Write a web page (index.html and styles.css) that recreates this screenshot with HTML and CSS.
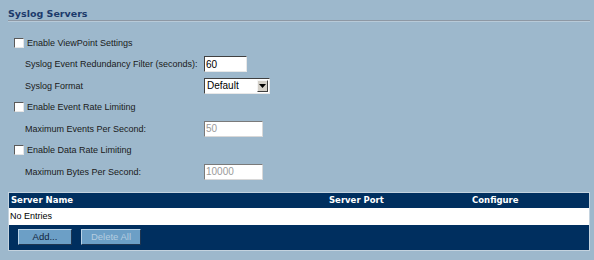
FILE: index.html
```html
<!DOCTYPE html>
<html lang="en">
<head>
    <meta charset="UTF-8">
    <title>Syslog Servers</title>
    <link rel="stylesheet" href="styles.css">
</head>
<body>
    <div class="page">
        <h1 class="title">Syslog Servers</h1>
        <form class="settings">
            <div class="row">
                <label class="check"><input type="checkbox"> Enable ViewPoint Settings</label>
            </div>
            <div class="row sub">
                <span class="label">Syslog Event Redundancy Filter (seconds):</span>
                <input type="text" class="field short" value="60">
            </div>
            <div class="row sub">
                <span class="label">Syslog Format</span>
                <div class="select-wrap">
                    <select class="field select">
                        <option>Default</option>
                    </select>
                    <span class="drop"><svg width="7" height="4" viewBox="0 0 7 4"><path d="M0 0h7L3.5 4z" fill="#000"/></svg></span>
                </div>
            </div>
            <div class="row">
                <label class="check"><input type="checkbox"> Enable Event Rate Limiting</label>
            </div>
            <div class="row sub">
                <span class="label">Maximum Events Per Second:</span>
                <input type="text" class="field wide" value="50" disabled>
            </div>
            <div class="row">
                <label class="check"><input type="checkbox"> Enable Data Rate Limiting</label>
            </div>
            <div class="row sub">
                <span class="label">Maximum Bytes Per Second:</span>
                <input type="text" class="field wide" value="10000" disabled>
            </div>
        </form>

        <div class="servers">
            <div class="thead">
                <span class="col-name">Server Name</span>
                <span class="col-port">Server Port</span>
                <span class="col-conf">Configure</span>
            </div>
            <div class="empty">No Entries</div>
            <div class="actions">
                <button type="button" class="btn add">Add...</button>
                <button type="button" class="btn del" disabled>Delete All</button>
            </div>
        </div>
    </div>
</body>
</html>
```

FILE: styles.css
```css
* { margin: 0; padding: 0; box-sizing: border-box; }
body {
    background: #9db8cc;
    font-family: 'Liberation Sans', Arial, sans-serif;
    font-size: 9px;
    color: #1a1a1a;
}
.page { padding: 8px 4px 0 8px; }
.title {
    font-family: 'DejaVu Sans', Verdana, sans-serif;
    font-size: 9.5px; font-weight: bold; color: #1c3a6b;
    height: 13px; line-height: 11px;
    border-bottom: 1px solid #8e98a4;
    box-shadow: 0 1px 0 #b8cad8;
}
.settings { padding-top: 11px; }
.row {
    display: flex; align-items: center;
    height: 21.5px;
    padding-left: 6px;
}
.row.sub { padding-left: 17px; }
.check { display: flex; align-items: center; gap: 3px; }
.check input {
    appearance: none; width: 10px; height: 10px; margin: 0;
    background: #fff;
    border: 1px solid; border-color: #5a5a5a #e6e6e6 #e6e6e6 #5a5a5a;
}
.label { width: 179px; }
.field {
    height: 16px; font-family: inherit; font-size: 10px;
    background: #fff; color: #000;
    border: 1px solid; border-color: #404040 #e8e8e8 #e8e8e8 #404040;
    padding: 0 1px;
}
.short { width: 43px; }
.wide { width: 59px; }
.field:disabled { color: #9a9a9a; border-color: #7a7a7a #d8d8d8 #d8d8d8 #7a7a7a; }
.select-wrap { position: relative; width: 66px; height: 16px; }
.select {
    appearance: none; width: 66px; padding: 0 2px;
    font-weight: normal; border-radius: 0;
}
.drop {
    position: absolute; right: 2px; top: 2px;
    width: 11px; height: 12px;
    background: #d4d0c8;
    border: 1px solid; border-color: #f4f4f4 #404040 #404040 #f4f4f4;
    display: flex; align-items: center; justify-content: center;
}

.servers {
    margin-top: 9px;
    width: 582px;
    border: 1px solid #c4d3df;
    background: #002f5f;
}
.thead {
    display: flex; height: 15px; align-items: center;
    font-family: 'DejaVu Sans', Verdana, sans-serif;
    font-size: 8.5px; font-weight: bold; color: #fff;
    padding-left: 2px;
}
.col-name { width: 318px; }
.col-port { width: 143px; }
.empty {
    background: #fff; height: 17px; line-height: 17px;
    padding-left: 1px; color: #000;
}
.actions { display: flex; gap: 9px; padding: 4px 0 5px 9px; }
.btn {
    width: 54px; height: 16px;
    font-family: inherit; font-size: 9.5px;
    background: #6c9fc6; color: #10243c;
    border: 1px solid; border-color: #b9d2e6 #1e3550 #1e3550 #b9d2e6;
}
.btn.del { width: 60px; color: #b4cde0; }
```
